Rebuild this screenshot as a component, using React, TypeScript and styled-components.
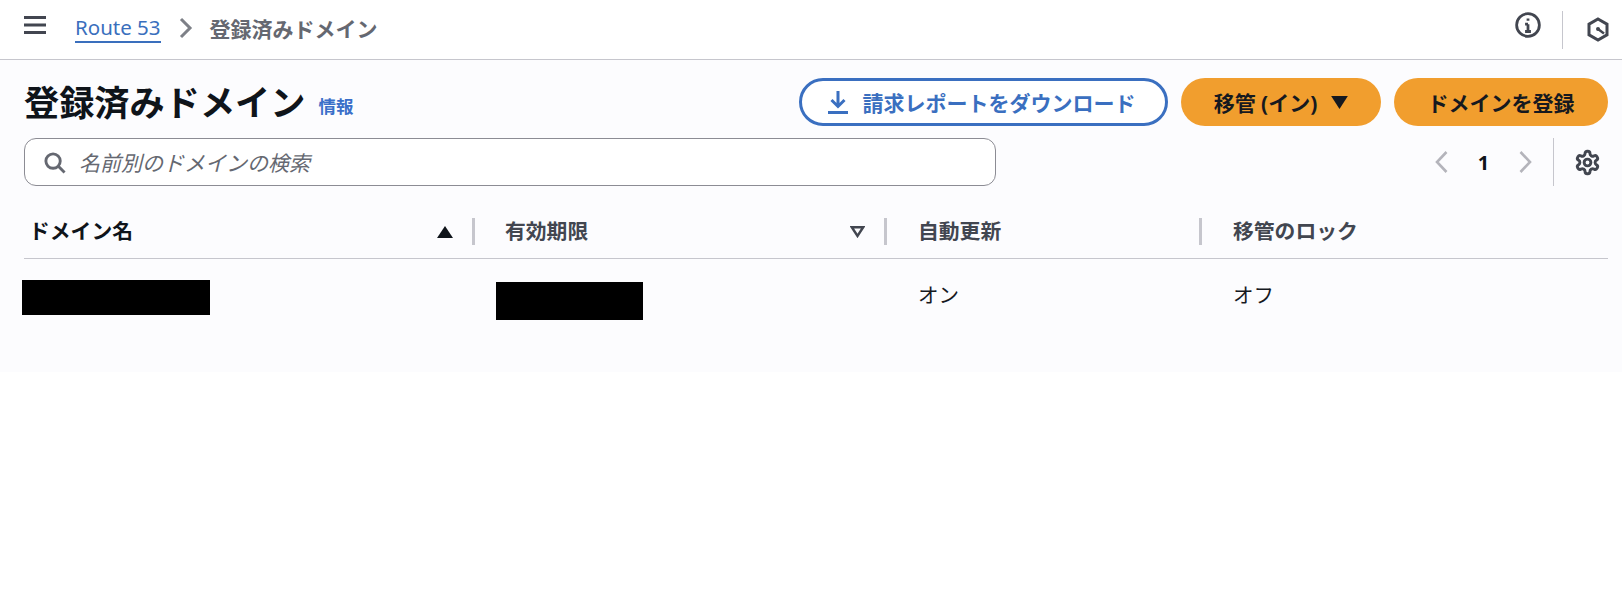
import React from "react";
import styled, { createGlobalStyle } from "styled-components";

const GlobalStyle = createGlobalStyle`
  html, body {
    margin: 0;
    padding: 0;
    background: #ffffff;
  }
  body {
    font-family: "Noto Sans", "Noto Sans CJK JP", sans-serif;
    font-size: 21px;
    color: #16191f;
  }
`;

const TopBar = styled.header`
  height: 59px;
  display: flex;
  align-items: center;
  padding-left: 24px;
  padding-right: 13px;
  background: #ffffff;
  border-bottom: 1px solid #c6c6cd;
`;

const IconButton = styled.span`
  display: inline-flex;
  margin-bottom: 9px;
  color: #424650;
`;

const Crumbs = styled.nav`
  display: flex;
  align-items: center;
  margin-left: 29px;
  margin-bottom: 3px;
  font-weight: 400;
`;

const CrumbLink = styled.a`
  color: #3a6fbd;
  line-height: 28px;
  font-size: 20.5px;
  border-bottom: 2px solid #3a6fbd;
`;

const CrumbSep = styled.span`
  display: inline-flex;
  margin: 0 17px 0 18px;
  color: #7d8087;
`;

const CrumbCurrent = styled.span`
  color: #656871;
  font-weight: 700;
`;

const TopActions = styled.div`
  margin-left: auto;
  display: flex;
  align-items: center;
`;

const TopDivider = styled.span`
  width: 1px;
  height: 38px;
  margin: 0 24px 0 21px;
  background: #c6c6cd;
`;

const Logo = styled.span`
  display: inline-flex;
  color: #424650;
`;

const Content = styled.main`
  height: 312px;
  box-sizing: border-box;
  padding: 18px 14px 0 24px;
  background: #fcfcfe;
`;

const TitleRow = styled.div`
  display: flex;
  align-items: center;
  height: 48px;
`;

const Title = styled.h1`
  margin: 0;
  font-size: 35.2px;
  line-height: 48px;
  font-weight: 700;
  color: #0f141a;
`;

const InfoLink = styled.a`
  margin: 6px 0 0 13px;
  font-size: 17.5px;
  font-weight: 700;
  color: #3a6fc9;
`;

const Actions = styled.div`
  margin-left: auto;
  display: flex;
  gap: 13px;
`;

const Button = styled.button<{ $primary?: boolean; $width: number }>`
  width: ${(p) => p.$width}px;
  height: 48px;
  box-sizing: border-box;
  display: flex;
  align-items: center;
  justify-content: center;
  gap: 14px;
  border-radius: 24px;
  border: ${(p) => (p.$primary ? "none" : "3px solid #3a6fc0")};
  background: ${(p) => (p.$primary ? "#f19e2e" : "#ffffff")};
  color: ${(p) => (p.$primary ? "#16191f" : "#3a6fc0")};
  font-family: inherit;
  font-size: 21px;
  font-weight: 700;
  padding: 0 ${(p) => (p.$primary ? 0 : 5)}px 0 0;
`;

const ToolRow = styled.div`
  display: flex;
  align-items: center;
  height: 48px;
  margin-top: 12px;
`;

const SearchBox = styled.div`
  width: 972px;
  height: 48px;
  box-sizing: border-box;
  display: flex;
  align-items: center;
  gap: 13px;
  padding-left: 18px;
  background: #ffffff;
  border: 1px solid #8c8c94;
  border-radius: 12px;
  color: #656871;
`;

const Placeholder = styled.span`
  font-size: 21px;
  font-style: italic;
  color: #656871;
`;

const Pager = styled.div`
  margin-left: auto;
  display: flex;
  align-items: center;
  height: 48px;
`;

const PagerArrow = styled.span`
  display: inline-flex;
  color: #b4b4bb;
`;

const PageNumber = styled.span`
  width: 71px;
  text-align: center;
  font-size: 20px;
  font-weight: 700;
  color: #0f141a;
`;

const PagerDivider = styled.span`
  width: 1px;
  height: 48px;
  margin: 0 20px 0 21px;
  background: #c6c6cd;
`;

const Gear = styled.span`
  display: inline-flex;
  margin-right: 7px;
  color: #424650;
`;

const Table = styled.div`
  display: grid;
  grid-template-columns: 451px 412px 315px 1fr;
  margin-top: 12px;
`;

const HeadCell = styled.div<{ $active?: boolean; $pad: number }>`
  height: 61px;
  box-sizing: border-box;
  display: flex;
  align-items: center;
  position: relative;
  padding-left: ${(p) => p.$pad}px;
  padding-top: 4px;
  border-bottom: 1px solid #c6c6cd;
  font-size: 20.8px;
  font-weight: 700;
  color: ${(p) => (p.$active ? "#0f141a" : "#424650")};
`;

const HeadDivider = styled.span`
  position: absolute;
  right: 0;
  top: 20px;
  width: 3px;
  height: 27px;
  background: #c6c6cd;
`;

const SortMark = styled.span<{ $active?: boolean }>`
  display: inline-flex;
  position: absolute;
  right: 22px;
  top: 28px;
  color: ${(p) => (p.$active ? "#0f141a" : "#424650")};
`;

const BodyCell = styled.div<{ $pad: number }>`
  padding-left: ${(p) => p.$pad}px;
  padding-top: 21px;
  font-size: 20.5px;
  line-height: 30px;
  color: #16191f;
`;

const Redacted = styled.div<{ $w: number; $h: number; $top: number; $left: number }>`
  width: ${(p) => p.$w}px;
  height: ${(p) => p.$h}px;
  margin-top: ${(p) => p.$top}px;
  margin-left: ${(p) => p.$left}px;
  background: #000000;
`;

const Stroke = ({ size, children, width = 2 }: { size: number; width?: number; children: React.ReactNode }) => (
  <svg width={size} height={size} viewBox="0 0 16 16" fill="none" stroke="currentColor" strokeWidth={width}>
    {children}
  </svg>
);

export default function App() {
  return (
    <>
      <GlobalStyle />
      <TopBar>
        <IconButton>
          <svg width="22" height="18" viewBox="0 0 22 18" fill="none" stroke="currentColor" strokeWidth="3">
            <path d="M0 1.5h22M0 9h22M0 16.5h22" />
          </svg>
        </IconButton>
        <Crumbs>
          <CrumbLink>Route 53</CrumbLink>
          <CrumbSep>
            <svg width="14" height="22" viewBox="0 0 14 22" fill="none" stroke="currentColor" strokeWidth="3">
              <path d="M2 2l9 9-9 9" />
            </svg>
          </CrumbSep>
          <CrumbCurrent>登録済みドメイン</CrumbCurrent>
        </Crumbs>
        <TopActions>
          <IconButton>
            <Stroke size={26} width={1.7}>
              <circle cx="8" cy="8" r="7" />
              <path d="M8 7.5V12M6.2 7.5H8M6.2 12h3.6M8 4v1.4" />
            </Stroke>
          </IconButton>
          <TopDivider />
          <Logo>
            <svg width="22" height="25" viewBox="0 0 22 25" fill="none" stroke="currentColor">
              <path d="M11 2l9 5.2v10.6L11 23l-9-5.2V7.2z" strokeWidth="3" />
              <circle cx="11" cy="12" r="2" fill="currentColor" stroke="none" />
              <path d="M11 12l6 4.5" strokeWidth="2.4" />
            </svg>
          </Logo>
        </TopActions>
      </TopBar>
      <Content>
        <TitleRow>
          <Title>登録済みドメイン</Title>
          <InfoLink>情報</InfoLink>
          <Actions>
            <Button $width={369}>
              <svg width="22" height="24" viewBox="0 0 22 24" fill="none" stroke="currentColor" strokeWidth="3">
                <path d="M1 22.5h20M11 1v15M4.5 10l6.5 6.5 6.5-6.5" />
              </svg>
              請求レポートをダウンロード
            </Button>
            <Button $primary $width={200}>
              移管 (イン)
              <svg width="17" height="13" viewBox="0 0 18 14" fill="currentColor">
                <path d="M0 0h18L9 14z" />
              </svg>
            </Button>
            <Button $primary $width={214}>
              ドメインを登録
            </Button>
          </Actions>
        </TitleRow>
        <ToolRow>
          <SearchBox>
            <Stroke size={23} width={2}>
              <circle cx="7" cy="7" r="5" />
              <path d="M15 15l-4.5-4.5" />
            </Stroke>
            <Placeholder>名前別のドメインの検索</Placeholder>
          </SearchBox>
          <Pager>
            <PagerArrow>
              <svg width="13" height="24" viewBox="0 0 13 24" fill="none" stroke="currentColor" strokeWidth="2.6">
                <path d="M11.5 2L2 12l9.5 10" />
              </svg>
            </PagerArrow>
            <PageNumber>1</PageNumber>
            <PagerArrow>
              <svg width="13" height="24" viewBox="0 0 13 24" fill="none" stroke="currentColor" strokeWidth="2.6">
                <path d="M1.5 2L11 12 1.5 22" />
              </svg>
            </PagerArrow>
            <PagerDivider />
            <Gear>
              <svg width="27" height="27" viewBox="0 0 24 24" fill="none" stroke="currentColor" strokeWidth="2.6" strokeLinejoin="round">
                <path d="M12.2 2h-.4a2 2 0 0 0-2 2v.2a2 2 0 0 1-1 1.7l-.4.3a2 2 0 0 1-2 0l-.2-.1a2 2 0 0 0-2.7.7l-.2.4a2 2 0 0 0 .7 2.7l.2.1a2 2 0 0 1 1 1.7v.6a2 2 0 0 1-1 1.7l-.2.1a2 2 0 0 0-.7 2.7l.2.4a2 2 0 0 0 2.7.7l.2-.1a2 2 0 0 1 2 0l.4.3a2 2 0 0 1 1 1.7v.2a2 2 0 0 0 2 2h.4a2 2 0 0 0 2-2v-.2a2 2 0 0 1 1-1.7l.4-.3a2 2 0 0 1 2 0l.2.1a2 2 0 0 0 2.7-.7l.2-.4a2 2 0 0 0-.7-2.7l-.2-.1a2 2 0 0 1-1-1.7v-.6a2 2 0 0 1 1-1.7l.2-.1a2 2 0 0 0 .7-2.7l-.2-.4a2 2 0 0 0-2.7-.7l-.2.1a2 2 0 0 1-2 0l-.4-.3a2 2 0 0 1-1-1.7V4a2 2 0 0 0-2-2z" />
                <circle cx="12" cy="12" r="3" />
              </svg>
            </Gear>
          </Pager>
        </ToolRow>
        <Table>
          <HeadCell $active $pad={5}>
            ドメイン名
            <SortMark $active>
              <svg width="16" height="12" viewBox="0 0 16 12" fill="currentColor">
                <path d="M8 0l8 12H0z" />
              </svg>
            </SortMark>
            <HeadDivider />
          </HeadCell>
          <HeadCell $pad={30}>
            有効期限
            <SortMark>
              <svg width="15" height="12" viewBox="0 0 15 12" fill="none" stroke="currentColor" strokeWidth="2.4">
                <path d="M1.8 1.2h11.4L7.5 10z" />
              </svg>
            </SortMark>
            <HeadDivider />
          </HeadCell>
          <HeadCell $pad={31}>
            自動更新
            <HeadDivider />
          </HeadCell>
          <HeadCell $pad={31}>移管のロック</HeadCell>
          <BodyCell $pad={0}>
            <Redacted $w={188} $h={35} $top={0} $left={-2} />
          </BodyCell>
          <BodyCell $pad={0}>
            <Redacted $w={147} $h={38} $top={2} $left={21} />
          </BodyCell>
          <BodyCell $pad={31}>オン</BodyCell>
          <BodyCell $pad={31}>オフ</BodyCell>
        </Table>
      </Content>
    </>
  );
}
